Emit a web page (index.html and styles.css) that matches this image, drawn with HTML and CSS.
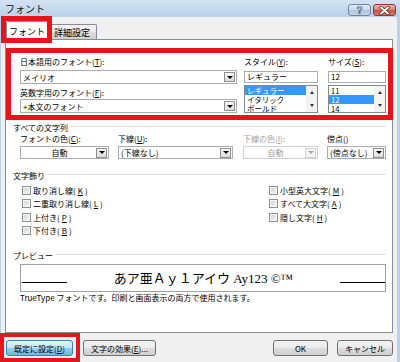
FILE: index.html
```html
<!DOCTYPE html>
<html lang="ja">
<head>
    <meta charset="UTF-8">
    <title>フォント</title>
    <link rel="stylesheet" href="styles.css">
</head>
<body>
<div class="window">
    <div class="titlebar">
        <span class="title">フォント</span>
        <div class="caption-btns">
            <span class="cap-btn help">?</span>
            <span class="cap-btn close">
                <svg width="11" height="9" viewBox="0 0 11 9">
                    <path d="M2 1.5 L9 7.5 M9 1.5 L2 7.5" stroke="#5a2a22" stroke-width="3.4" stroke-linecap="round"/>
                    <path d="M2 1.5 L9 7.5 M9 1.5 L2 7.5" stroke="#fff" stroke-width="1.9" stroke-linecap="round"/>
                </svg>
            </span>
        </div>
    </div>

    <div class="client">
        <div class="tabs">
            <span class="tab tab-on">フォント</span>
            <span class="tab tab-off">詳細設定</span>
        </div>

        <div class="panel">
            <!-- font / style / size -->
            <div class="font-sec">
                <div class="col-main">
                    <span class="lbl">日本語用のフォント(<u>T</u>):</span>
                    <div class="combo"><span>メイリオ</span><i class="drop"></i></div>
                    <span class="lbl lbl-2">英数字用のフォント(<u>F</u>):</span>
                    <div class="combo combo-2"><span>+本文のフォント</span><i class="drop"></i></div>
                </div>
                <div class="col-style">
                    <span class="lbl">スタイル(<u>Y</u>):</span>
                    <div class="field">レギュラー</div>
                    <div class="list">
                        <div class="list-items">
                            <div class="item sel">レギュラー</div>
                            <div class="item">イタリック</div>
                            <div class="item">ボールド</div>
                        </div>
                        <div class="sb"><i class="up"></i><i class="down"></i></div>
                    </div>
                </div>
                <div class="col-size">
                    <span class="lbl">サイズ(<u>S</u>):</span>
                    <div class="field">12</div>
                    <div class="list">
                        <div class="list-items">
                            <div class="item">11</div>
                            <div class="item sel">12</div>
                            <div class="item">14</div>
                        </div>
                        <div class="sb"><i class="up"></i><i class="down"></i></div>
                    </div>
                </div>
            </div>

            <div class="group-head head-all"><span>すべての文字列</span><i class="rule"></i></div>
            <div class="row2">
                <div class="c1">
                    <span class="lbl">フォントの色(<u>C</u>):</span>
                    <div class="combo small center"><span>自動</span><i class="drop"></i></div>
                </div>
                <div class="c2">
                    <span class="lbl">下線(<u>U</u>):</span>
                    <div class="combo small"><span>(下線なし)</span><i class="drop"></i></div>
                </div>
                <div class="c3 disabled">
                    <span class="lbl">下線の色(<u>I</u>):</span>
                    <div class="combo small center"><span>自動</span><i class="drop"></i></div>
                </div>
                <div class="c4">
                    <span class="lbl">傍点()</span>
                    <div class="combo small"><span>(傍点なし)</span><i class="drop"></i></div>
                </div>
            </div>

            <div class="group-head head-deco"><span>文字飾り</span><i class="rule"></i></div>
            <div class="checks">
                <label class="chk"><i class="box"></i>取り消し線(<u>K</u>)</label>
                <label class="chk"><i class="box"></i>二重取り消し線(<u>L</u>)</label>
                <label class="chk"><i class="box"></i>上付き(<u>P</u>)</label>
                <label class="chk"><i class="box"></i>下付き(<u>B</u>)</label>
                <label class="chk"><i class="box"></i>小型英大文字(<u>M</u>)</label>
                <label class="chk"><i class="box"></i>すべて大文字(<u>A</u>)</label>
                <label class="chk"><i class="box"></i>隠し文字(<u>H</u>)</label>
            </div>

            <div class="group-head head-prev"><span>プレビュー</span><i class="rule"></i></div>
            <div class="preview">
                <i class="pv-line"></i>
                <div class="pv-text"><span class="jp">あア亜Ａｙ１アイウ</span><span class="lat"> Ay123 ©™</span></div>
                <i class="pv-line"></i>
            </div>
            <div class="note">TrueType フォントです。印刷と画面表示の両方で使用されます。</div>
        </div>

        <div class="btns">
            <span class="btn b-def">既定に設定(<u>D</u>)</span>
            <span class="btn b-eff">文字の効果(<u>E</u>)...</span>
            <span class="btn b-ok">OK</span>
            <span class="btn b-cancel">キャンセル</span>
        </div>
    </div>

    <!-- red annotation frames -->
    <div class="mark mark-tab"></div>
    <div class="mark mark-font"></div>
    <div class="mark mark-default"></div>
</div>
</body>
</html>
```

FILE: styles.css
```css
* {
    box-sizing: border-box;
}

body {
    margin: 0;
    font-family: "Noto Sans CJK JP", "Liberation Sans", sans-serif;
    font-size: 8px;
    color: #000;
}

u {
    text-decoration: underline;
    text-underline-offset: 1px;
}

.window {
    position: relative;
    width: 400px;
    height: 362px;
    overflow: hidden;
    background: #b9d1ea;
    display: flex;
    flex-direction: column;
}

/* title bar */
.titlebar {
    height: 17px;
    flex: none;
    display: flex;
    align-items: center;
    padding: 0 4px 0 5px;
    background: linear-gradient(#d2e2f3, #b9d1ea);
}
.title {
    font-size: 10px;
    line-height: 12px;
    color: #111;
}
.caption-btns {
    margin-left: auto;
    align-self: flex-end;
    margin-bottom: 1px;
    display: flex;
    gap: 2px;
}
.cap-btn {
    width: 23px;
    height: 12px;
    border-radius: 3px;
    display: flex;
    align-items: center;
    justify-content: center;
}
.help {
    border: 1px solid #7086a4;
    background: linear-gradient(#e4edf7, #c8d8ea 50%, #b0c5de 50%, #c4d5e9);
    color: #fff;
    font-family: "Liberation Sans", sans-serif;
    font-weight: bold;
    font-size: 10px;
    -webkit-text-stroke: 0.7px #4a5d78;
}
.close {
    border: 1px solid #8a3a30;
    background: linear-gradient(#ebb2a5, #d88371 50%, #c6513f 50%, #d47d69);
}

/* client area */
.client {
    flex: 1;
    margin: 0 3px 0 1px;
    background: #f0f0f0;
    display: flex;
    flex-direction: column;
}

.tabs {
    height: 22px;
    flex: none;
    display: flex;
    align-items: flex-end;
    padding-left: 5px;
}
.tab {
    border: 1px solid #898c95;
    border-bottom: none;
    font-size: 9px;
    text-align: center;
    white-space: nowrap;
}
.tab-on {
    position: relative;
    z-index: 1;
    width: 42px;
    height: 19px;
    margin-bottom: -1px;
    background: #fff;
    line-height: 19px;
    border-radius: 2px 2px 0 0;
}
.tab-off {
    width: 49px;
    height: 15px;
    border-left: none;
    line-height: 15px;
    background: linear-gradient(#f3f3f3, #ebebeb 50%, #dddddd 50%, #cfcfcf);
    border-radius: 0 2px 0 0;
}

.panel {
    flex: none;
    height: 294px;
    margin: 0 4px;
    border: 1px solid #898c95;
    background: #fff;
    padding: 16px 6px 0 14px;
}

.lbl {
    display: block;
    height: 12px;
    line-height: 12px;
    white-space: nowrap;
}

/* combo boxes */
.combo {
    display: flex;
    align-items: center;
    height: 14px;
    margin-top: 2px;
    padding-left: 2px;
    border: 1px solid #abadb3;
    background: #fff;
    white-space: nowrap;
}
.combo.small {
    height: 13px;
    margin-top: 1px;
}
.combo.center span {
    flex: 1;
    text-align: center;
}
.drop {
    margin-left: auto;
    margin-right: 1px;
    width: 11px;
    height: 10px;
    flex: none;
    border: 1px solid #8f8f8f;
    background: linear-gradient(#f7f7f7, #dcdcdc);
    display: flex;
    align-items: center;
    justify-content: center;
}
.drop::after {
    content: "";
    border-left: 3px solid transparent;
    border-right: 3px solid transparent;
    border-top: 3px solid #000;
}
.combo-2 {
    margin-top: 0;
}
.lbl-2 {
    margin-top: 3px;
}

/* font section */
.font-sec {
    display: flex;
}
.col-main {
    width: 217px;
}
.col-style {
    width: 74px;
    margin-left: 7px;
}
.col-size {
    width: 58px;
    margin-left: 10px;
}
.field {
    height: 12px;
    margin-top: 3px;
    padding-left: 2px;
    line-height: 10px;
    border: 1px solid #abadb3;
}
.list {
    height: 28px;
    margin-top: 2px;
    border: 1px solid #828790;
    display: flex;
    overflow: hidden;
}
.list-items {
    flex: 1;
}
.item {
    height: 9px;
    line-height: 9px;
    font-size: 7.5px;
    padding-left: 2px;
    white-space: nowrap;
    overflow: hidden;
}
.item.sel {
    background: #3399ff;
    color: #fff;
}
.sb {
    width: 11px;
    display: flex;
    flex-direction: column;
    background: #f3f3f3;
}
.sb i {
    flex: 1;
    display: flex;
    align-items: center;
    justify-content: center;
}
.sb .up::after {
    content: "";
    border-left: 2.5px solid transparent;
    border-right: 2.5px solid transparent;
    border-bottom: 3px solid #333;
}
.sb .down::after {
    content: "";
    border-left: 2.5px solid transparent;
    border-right: 2.5px solid transparent;
    border-top: 3px solid #333;
}

/* group headers */
.group-head {
    display: flex;
    align-items: center;
    gap: 3px;
    height: 12px;
    margin-left: -7px;
    white-space: nowrap;
}
.rule {
    flex: 1;
    height: 2px;
    border-top: 1px solid #d5dfe5;
    border-bottom: 1px solid #fff;
}
.head-all {
    margin-top: 8px;
}
.head-deco {
    margin-top: 10px;
}
.head-prev {
    margin-top: 11.5px;
}

/* second row */
.row2 {
    display: flex;
}
.c1 { width: 89px; }
.c2 { width: 115px; margin-left: 9px; }
.c3 { width: 75px; margin-left: 10px; }
.c4 { width: 59px; margin-left: 9px; }

.disabled {
    color: #a0a0a0;
}
.disabled .combo {
    border-color: #cfcfcf;
}
.disabled .drop {
    border-color: #d4d4d4;
    background: #f4f4f4;
}
.disabled .drop::after {
    border-top-color: #a8a8a8;
}

/* check boxes */
.checks {
    display: grid;
    grid-template-columns: 247px 1fr;
    grid-template-rows: repeat(4, 13.5px);
    grid-auto-flow: column;
    margin: 2.5px 0 0 2px;
}
.chk {
    display: flex;
    align-items: center;
    gap: 2px;
    white-space: nowrap;
}
.box {
    width: 9px;
    height: 9px;
    border: 1px solid #8e8f8f;
    box-shadow: inset 0 0 0 1px #f6f6f6;
    background: linear-gradient(135deg, #cfd2d6, #f6f6f6);
}

/* preview */
.preview {
    height: 28px;
    margin-top: 3px;
    border: 1px solid #a0a0a0;
    display: flex;
    align-items: center;
    padding-left: 1px;
}
.pv-line {
    width: 45px;
    height: 1px;
    background: #000;
    align-self: flex-end;
    margin-bottom: 8px;
}
.pv-text {
    flex: 1;
    text-align: center;
    font-size: 13px;
    line-height: 16px;
    white-space: nowrap;
}
.pv-text .jp {
    font-family: "Noto Sans CJK JP", sans-serif;
}
.pv-text .lat {
    font-family: "Liberation Serif", serif;
}
.note {
    margin-top: 1px;
    line-height: 10px;
    white-space: nowrap;
}

/* bottom buttons */
.btns {
    display: flex;
    margin-top: 7px;
    padding: 0 4px 0 5px;
}
.btn {
    height: 16px;
    border: 1px solid #707070;
    border-radius: 3px;
    display: flex;
    align-items: center;
    justify-content: center;
    white-space: nowrap;
    background: linear-gradient(#f2f2f2, #ebebeb 50%, #dddddd 50%, #cfcfcf);
}
.b-def {
    width: 67px;
    border-color: #3c7fb1;
    background: linear-gradient(#e3f3fc, #c4e5f6 50%, #98d1ef 50%, #6fb7de);
}
.b-eff {
    width: 73px;
    margin-left: 10px;
}
.b-ok {
    width: 55px;
    margin-left: auto;
}
.b-cancel {
    width: 56px;
    margin-left: 9px;
}

/* red annotation frames laid over the dialog */
.mark {
    position: absolute;
    border: 5px solid #e8141c;
    z-index: 5;
}
.mark-tab {
    left: 1px;
    top: 16px;
    width: 51px;
    height: 27px;
}
.mark-font {
    left: 6px;
    top: 48px;
    width: 387px;
    height: 72px;
}
.mark-default {
    left: 0;
    top: 333px;
    width: 80px;
    height: 29px;
    border-width: 4px;
}
```
